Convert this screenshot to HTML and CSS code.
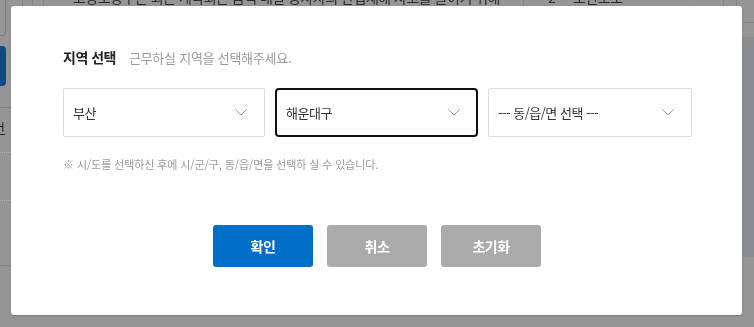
FILE: index.html
```html
<!DOCTYPE html>
<html lang="ko">
<head>
<meta charset="utf-8">
<title>지역 선택</title>
<link rel="stylesheet" href="styles.css">
</head>
<body>
<div class="bg">
  <div class="bg-top">
    <span class="bg-title">고용노동부는 최근 계약되는 음식 배달 종사자의 산업재해 사고를 줄이기 위해</span>
    <span class="bg-num">2</span>
    <span class="bg-name">조반모조</span>
    <span class="bg-caret">▼</span>
  </div>
  <i class="vl vl1"></i><i class="vl vl2"></i><i class="vl vl3"></i><i class="vl vl4"></i><i class="vl vl5"></i><i class="vl vl6"></i>
  <div class="bg-box"></div>
  <div class="bg-blue"></div>
  <i class="hl hl1"></i>
  <span class="bg-gun">건</span>
  <i class="dl dl1"></i><i class="dl dl2"></i>
  <i class="hl hl2"></i>
  <i class="hl hl3"></i>
  <div class="bg-rside"></div>
</div>

<div class="modal">
  <div class="head">
    <h2 class="title">지역 선택</h2>
    <span class="sub">근무하실 지역을 선택해주세요.</span>
  </div>
  <div class="selects">
    <div class="sel"><span>부산</span><svg class="chev" width="12" height="7" viewBox="0 0 12 7"><polyline points="0.5,0.5 6,6 11.5,0.5" fill="none" stroke="#9a9a9a" stroke-width="1"/></svg></div>
    <div class="sel active"><span>해운대구</span><svg class="chev" width="12" height="7" viewBox="0 0 12 7"><polyline points="0.5,0.5 6,6 11.5,0.5" fill="none" stroke="#9a9a9a" stroke-width="1"/></svg></div>
    <div class="sel"><span>--- 동/읍/면 선택 ---</span><svg class="chev" width="12" height="7" viewBox="0 0 12 7"><polyline points="0.5,0.5 6,6 11.5,0.5" fill="none" stroke="#9a9a9a" stroke-width="1"/></svg></div>
  </div>
  <p class="note">※ 시/도를 선택하신 후에 시/군/구, 동/읍/면을 선택하 실 수 있습니다.</p>
  <div class="btns">
    <button class="btn primary">확인</button>
    <button class="btn gray">취소</button>
    <button class="btn gray">초기화</button>
  </div>
</div>
</body>
</html>
```

FILE: styles.css
```css
* { box-sizing: border-box; }
html, body {
  margin: 0;
  padding: 0;
  width: 754px;
  height: 327px;
  overflow: hidden;
  background: #959595;
  font-family: "Noto Sans CJK KR", "Noto Sans", sans-serif;
}

/* dimmed page behind the modal */
.bg { position: fixed; inset: 0; }
.bg-top { position: absolute; left: 0; top: -13px; height: 20px; width: 754px; font-size: 14px; color: #2c2c2c; letter-spacing: -0.5px; white-space: nowrap; }
.bg-title { position: absolute; left: 73px; top: 0; }
.bg-num { position: absolute; left: 548px; top: 0; }
.bg-name { position: absolute; left: 573px; top: 0; }
.bg-caret { position: absolute; left: 690px; top: 4px; font-size: 8px; color: #b5b5b5; }
.vl { position: absolute; top: 0; width: 1px; height: 7px; background: #858585; }
.vl1 { left: 22px; } .vl2 { left: 32px; } .vl3 { left: 43px; }
.vl4 { left: 523px; } .vl5 { left: 723px; } .vl6 { left: 736px; }
.bg-box { position: absolute; left: -10px; top: -4px; width: 16px; height: 40px; border: 1px solid #7d7d7d; border-radius: 3px; }
.bg-blue { position: absolute; left: -6px; top: 46px; width: 12px; height: 40px; background: #0b4c86; border-radius: 4px; }
.hl { position: absolute; left: 0; width: 11px; height: 1px; background: #858585; }
.hl1 { top: 107px; } .hl2 { top: 265px; }
.hl3 { left: 742px; top: 22px; width: 12px; }
.bg-gun { position: absolute; left: -7px; top: 118px; font-size: 13px; color: #222; text-decoration: underline; }
.dl { position: absolute; left: 0; width: 11px; border-top: 1px dotted #b0b0b0; }
.dl1 { top: 152px; } .dl2 { top: 200px; }
.bg-rside { position: absolute; left: 742px; top: 37px; width: 12px; height: 220px; background: #8a8e92; }

/* modal */
.modal {
  position: absolute;
  left: 11px;
  top: 6px;
  width: 731px;
  height: 309px;
  background: #fff;
  border-radius: 3px;
  box-shadow: 0 1px 2px rgba(0,0,0,0.2);
  padding: 41px 50px 0 52px;
  display: flex;
  flex-direction: column;
}
.head { display: flex; align-items: baseline; gap: 13px; height: 20px; line-height: 20px; }
.title { margin: 0; font-size: 14px; font-weight: 700; color: #222; letter-spacing: -0.5px; }
.sub { font-size: 13px; color: #9a9a9a; letter-spacing: -0.25px; }

.selects { display: grid; grid-template-columns: 202px 203px 204px; gap: 10px; margin-top: 21px; }
.sel {
  height: 49px;
  border: 1px solid #dcdcdc;
  border-radius: 2px;
  display: flex;
  align-items: center;
  justify-content: space-between;
  padding: 0 17px 0 9px;
  font-size: 13px;
  color: #333;
  letter-spacing: -0.5px;
}
.sel.active { border: 2px solid #111; border-radius: 4px; padding: 0 16px 0 9px; }
.chev { display: block; }

.note { margin: 19px 0 0; font-size: 11px; line-height: 16px; color: #9a9a9a; letter-spacing: -0.1px; }

.btns { display: flex; justify-content: center; gap: 14px; margin-top: 53px; margin-left: -1px; }
.btn {
  width: 100px;
  height: 42px;
  border: 0;
  border-radius: 3px;
  font-family: inherit;
  font-size: 14px;
  font-weight: 700;
  color: #fff;
  letter-spacing: -0.5px;
  padding: 0;
}
.primary { background: #006fc9; }
.gray { background: #aaaaaa; }
```
